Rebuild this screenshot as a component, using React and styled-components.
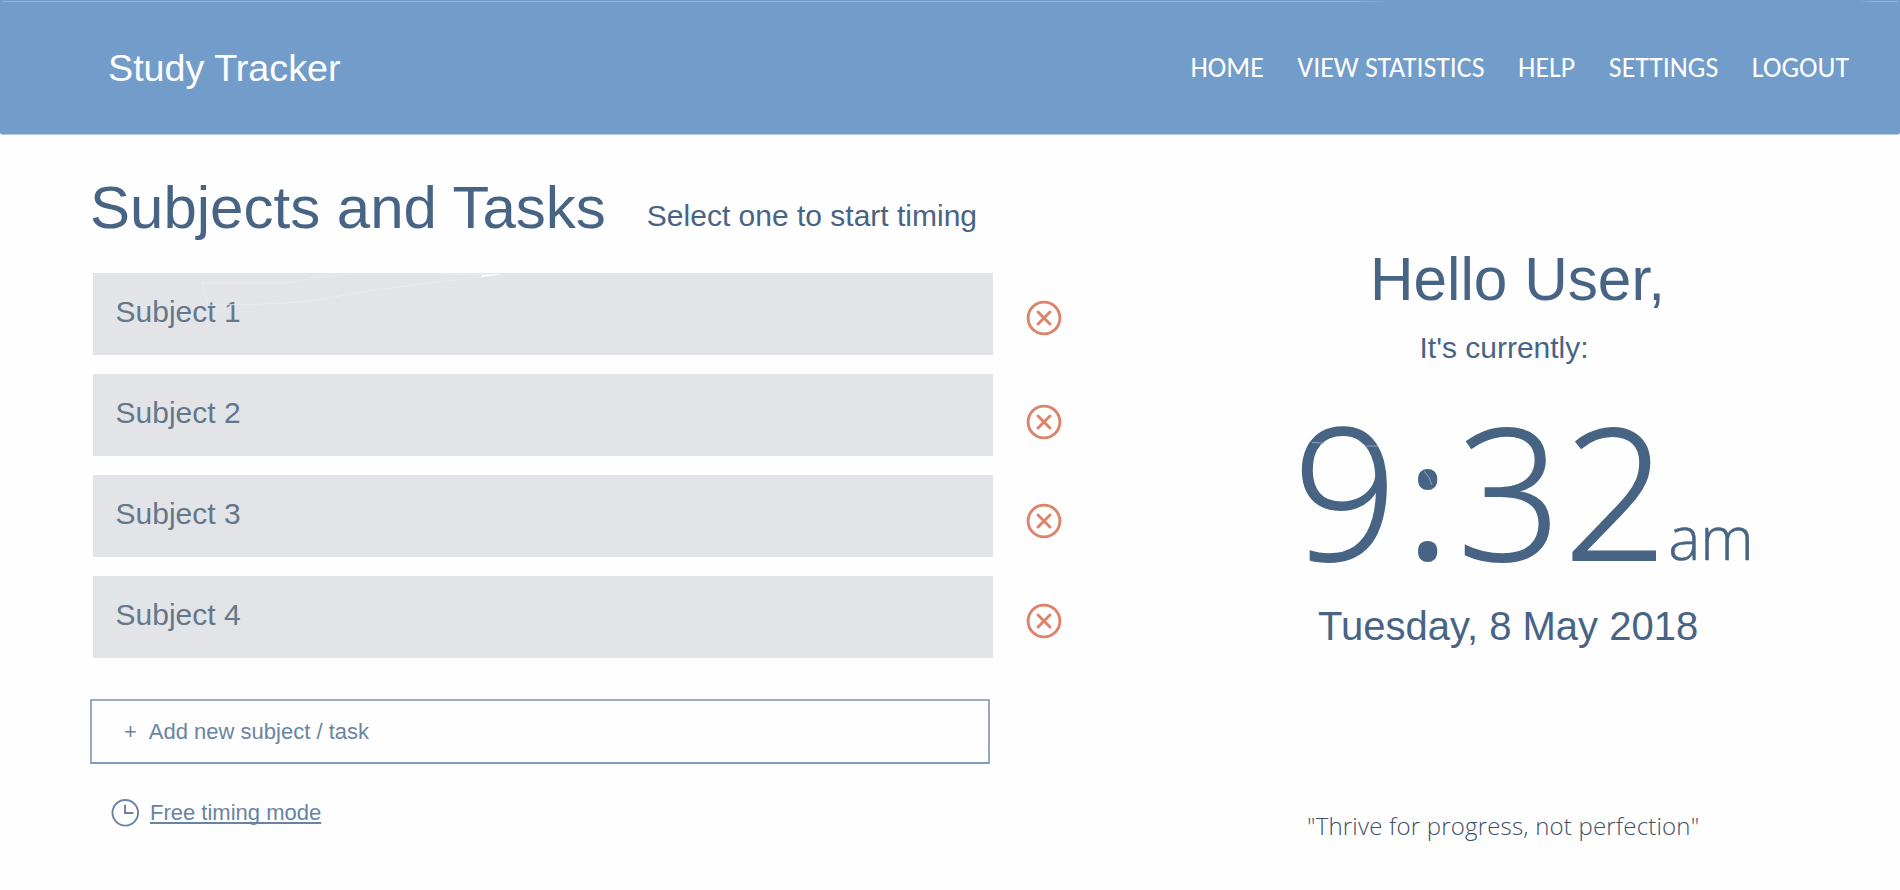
import React from 'react';
import styled, { createGlobalStyle } from 'styled-components';

const Global = createGlobalStyle`
  * { box-sizing: border-box; }
  body { margin: 0; background: #fefefe; color: #486484; font-family: "Liberation Sans", Arial, sans-serif; }
`;

const Page = styled.div`
  width: 1900px;
  height: 890px;
  overflow: hidden;
`;

const Header = styled.header`
  position: relative;
  display: flex;
  align-items: center;
  justify-content: space-between;
  height: 135px;
  padding: 0 51px 0 108px;
  background: #729cca;
  border-bottom: 1px solid #b4cbe4;
  border-radius: 0 0 3px 3px;
`;

const TopLine = styled.div`
  position: absolute;
  top: 1px;
  left: 3px;
  right: 2px;
  height: 1px;
  background: linear-gradient(to right, #a9adb9 1355px, transparent 1385px, transparent 1855px, #a9adb9 1870px);
`;

const Brand = styled.div`
  padding-top: 2px;
  font-size: 37.7px;
  line-height: 44px;
  color: #fff;
`;

const Nav = styled.nav`
  display: flex;
  gap: 33.6px;
`;

const NavLink = styled.a`
  font: 400 27.9px/36px Carlito, Calibri, "Open Sans", sans-serif;
  color: #fff;
  white-space: nowrap;
`;

const Main = styled.main`
  display: grid;
  grid-template-columns: 1290px 1fr;
`;

const Subjects = styled.section`
  padding: 43px 0 0 90px;
`;

const Heading = styled.div`
  display: flex;
  align-items: flex-start;
  gap: 41px;
  margin-bottom: 35px;
`;

const Title = styled.h1`
  margin: 0;
  font-size: 60px;
  font-weight: 400;
  line-height: 60px;
`;

const Hint = styled.p`
  margin: 20px 0 0;
  font-size: 30px;
  line-height: 36px;
`;

const List = styled.div`
  display: flex;
  flex-direction: column;
  gap: 19px;
  margin-left: 3px;
`;

const Row = styled.div`
  display: flex;
  align-items: flex-start;
  gap: 32.5px;
`;

const Subject = styled.div`
  position: relative;
  display: flex;
  align-items: center;
  width: 900px;
  height: 82px;
  padding: 0 22.5px 5px;
  background: #e3e4e8;
  color: #64778b;
  font-size: 30px;
`;

const Scratch = styled.svg`
  position: absolute;
  top: 0;
  left: 0;
  pointer-events: none;
`;

const Remove = styled.button`
  width: 36px;
  height: 36px;
  margin: ${p => p.$drop}px 0 0;
  padding: 0;
  border: 0;
  background: none;
`;

const Icon = styled.svg`
  display: block;
  fill: none;
  stroke: ${p => p.$color};
  stroke-width: ${p => p.$weight};
`;

const AddBox = styled.div`
  display: flex;
  align-items: center;
  gap: 12px;
  width: 900px;
  height: 65px;
  margin-top: 41px;
  padding-left: 32px;
  border: 2px solid #97aabf;
  border-bottom-color: #809bb9;
  color: #6984a3;
  font-size: 22px;
`;

const FreeMode = styled.div`
  display: flex;
  align-items: center;
  gap: 10px;
  height: 30px;
  margin: 33px 0 0 20px;
`;

const FreeLink = styled.a`
  padding-top: 2px;
  color: #6984a3;
  font-size: 22px;
  line-height: 30px;
  text-decoration: underline;
  text-decoration-thickness: 2px;
  text-underline-offset: 2px;
  text-decoration-skip-ink: none;
`;

const Aside = styled.aside`
  display: flex;
  flex-direction: column;
  align-items: flex-start;
  padding-top: 109px;
`;

const Greeting = styled.h2`
  margin: 0 0 14px 80px;
  font-size: 60.3px;
  font-weight: 400;
  line-height: 70px;
`;

const Lead = styled.p`
  margin: 0 0 21px 129.5px;
  font-size: 30px;
  line-height: 40px;
`;

const Clock = styled.div`
  position: relative;
  display: flex;
  align-items: baseline;
  height: 200px;
  margin-left: 3px;
  font: 300 183px/200px "Open Sans", sans-serif;
`;

const Digits = styled.span`
  letter-spacing: 1.5px;
  -webkit-text-stroke: 1.8px currentColor;
`;

const Colon = styled.span`
  margin: 0 8px 0 7px;
  font-size: 165px;
  font-weight: 400;
`;

const Meridiem = styled.span`
  margin-left: -1px;
  font-size: 60.5px;
  -webkit-text-stroke: 0.5px currentColor;
`;

const Today = styled.p`
  margin: 12px 0 0 28px;
  font-size: 40px;
  line-height: 50px;
`;

const Quote = styled.p`
  margin: 157px 0 0 17px;
  font: 300 24px/36px "Open Sans", sans-serif;
  letter-spacing: 0.2px;
  color: #404f69;
`;

const subjects = [
  { name: 'Subject 1', drop: 27, worn: true },
  { name: 'Subject 2', drop: 30.4 },
  { name: 'Subject 3', drop: 28 },
  { name: 'Subject 4', drop: 27 },
];

const links = ['HOME', 'VIEW STATISTICS', 'HELP', 'SETTINGS', 'LOGOUT'];

function CloseIcon() {
  return (
    <Icon width="36" height="36" viewBox="0 0 36 36" $color="#dc836b" $weight={2.9} strokeLinecap="round">
      <circle cx="18" cy="18" r="15.9" />
      <path d="M12 12 24 24M24 12 12 24" />
    </Icon>
  );
}

function ClockIcon() {
  return (
    <Icon width="30" height="30" viewBox="0 0 30 30" $color="#6984a3" $weight={1.9}>
      <circle cx="15.3" cy="15.8" r="12.8" />
      <path d="M15 7.8v8.2h8.4" />
    </Icon>
  );
}

export default function App() {
  return (
    <Page>
      <Global />
      <Header>
        <TopLine />
        <Brand>Study Tracker</Brand>
        <Nav>{links.map(l => <NavLink key={l}>{l}</NavLink>)}</Nav>
      </Header>
      <Main>
        <Subjects>
          <Heading>
            <Title>Subjects and Tasks</Title>
            <Hint>Select one to start timing</Hint>
          </Heading>
          <List>
            {subjects.map(s => (
              <Row key={s.name}>
                <Subject>
                  {s.name}
                  {s.worn && (
                    <Scratch width="450" height="40" fill="none" stroke="#eaebee">
                      <path d="M115 32.3 109 9.7H198L221 4.3 243 3.3 259 0M115 32.3C170 31 200 31 228 26.3S270 18 300 14.7L407 1.3M348 0l12 1.3h30" />
                      <path d="M389 2v1.7L407 1.5z" fill="#fff" stroke="#fff" strokeWidth=".5" />
                    </Scratch>
                  )}
                </Subject>
                <Remove $drop={s.drop} aria-label="Remove"><CloseIcon /></Remove>
              </Row>
            ))}
          </List>
          <AddBox><span>+</span><span>Add new subject / task</span></AddBox>
          <FreeMode><ClockIcon /><FreeLink>Free timing mode</FreeLink></FreeMode>
        </Subjects>
        <Aside>
          <Greeting>Hello User,</Greeting>
          <Lead>It's currently:</Lead>
          <Clock>
            <Digits>9</Digits><Colon>:</Colon><Digits>32</Digits><Meridiem>am</Meridiem>
            <Scratch width="200" height="120" fill="none" stroke="#8fa1b5">
              <path d="M19 53.5l12 .5M73 57h12M131 82q6 6 8 14" />
            </Scratch>
          </Clock>
          <Today>Tuesday, 8 May 2018</Today>
          <Quote>"Thrive for progress, not perfection"</Quote>
        </Aside>
      </Main>
    </Page>
  );
}
